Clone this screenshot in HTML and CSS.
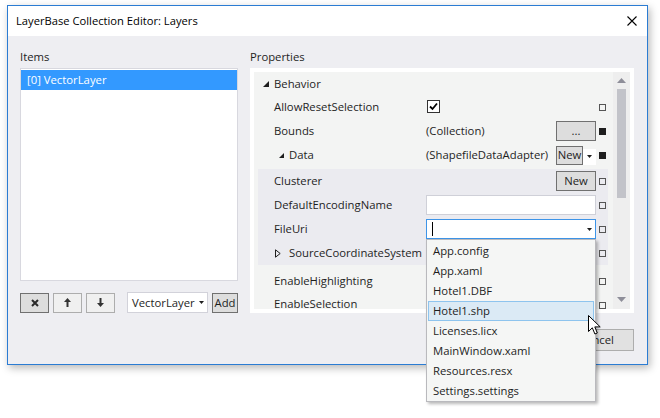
FILE: index.html
```html
<!DOCTYPE html>
<html>
<head>
<meta charset="utf-8">
<title>LayerBase Collection Editor: Layers</title>
<link rel="stylesheet" href="styles.css">
</head>
<body>
<div class="window">
  <div class="titlebar">
    <span class="title">LayerBase Collection Editor: Layers</span>
    <svg class="close" width="10" height="10" viewBox="0 0 10 10"><path d="M0.5 0.5L9.5 9.5M9.5 0.5L0.5 9.5" stroke="#000" stroke-width="1.1" fill="none"/></svg>
  </div>
  <div class="body">
    <div class="columns">
      <div class="left-col">
        <div class="label">Items</div>
        <div class="items-list">
          <div class="item selected">[0] VectorLayer</div>
        </div>
        <div class="toolbar">
          <div class="tbtn dark"><svg width="8" height="8" viewBox="0 0 8 8"><path d="M1 1L7 7M7 1L1 7" stroke="#2a2a2a" stroke-width="2" fill="none"/></svg></div>
          <div class="tbtn"><svg width="7" height="9" viewBox="0 0 7 9"><path d="M3.5 0L7 4H4.5V9H2.5V4H0Z" fill="#333"/></svg></div>
          <div class="tbtn"><svg width="7" height="9" viewBox="0 0 7 9"><path d="M3.5 9L7 5H4.5V0H2.5V5H0Z" fill="#333"/></svg></div>
          <div class="combo-sm"><span>VectorLayer</span><svg width="5" height="3" viewBox="0 0 5 3"><path d="M0 0H5L2.5 3Z" fill="#1e1e1e"/></svg></div>
          <div class="add">Add</div>
        </div>
      </div>
      <div class="right-col">
        <div class="label">Properties</div>
        <div class="panel">
          <div class="grid">
            <div class="row cat">
              <div class="name"><svg class="exp" width="6" height="6" viewBox="0 0 6 6"><path d="M6 0V6H0Z" fill="#1e1e1e"/></svg>Behavior</div>
              <div class="value"></div>
              <div class="mark"></div>
            </div>
            <div class="row">
              <div class="name">AllowResetSelection</div>
              <div class="value"><span class="check"><svg width="11" height="11" viewBox="0 0 11 11"><path d="M2 5.5L4.5 8L9 2.5" stroke="#000" stroke-width="1.8" fill="none"/></svg></span></div>
              <div class="mark"><i class="sq"></i></div>
            </div>
            <div class="row">
              <div class="name">Bounds</div>
              <div class="value"><span>(Collection)</span><span class="pbtn wide">...</span></div>
              <div class="mark"><i class="sq set"></i></div>
            </div>
            <div class="row">
              <div class="name"><svg class="exp-sm" width="5" height="5" viewBox="0 0 5 5"><path d="M5 0V5H0Z" fill="#1e1e1e"/></svg>Data</div>
              <div class="value"><span>(ShapefileDataAdapter)</span><span class="split"><span class="pbtn new">New</span><span class="drop"><svg width="5" height="3" viewBox="0 0 5 3"><path d="M0 0H5L2.5 3Z" fill="#1e1e1e"/></svg></span></span></div>
              <div class="mark"><i class="sq set"></i></div>
            </div>
            <div class="nested">
              <div class="row">
                <div class="name">Clusterer</div>
                <div class="value end"><span class="pbtn wide">New</span></div>
                <div class="mark"><i class="sq"></i></div>
              </div>
              <div class="row">
                <div class="name">DefaultEncodingName</div>
                <div class="value"><span class="textbox"></span></div>
                <div class="mark"><i class="sq"></i></div>
              </div>
              <div class="row">
                <div class="name">FileUri</div>
                <div class="value"><span class="textbox focus"><span class="caret"></span><svg width="5" height="3" viewBox="0 0 5 3"><path d="M0 0H5L2.5 3Z" fill="#1e1e1e"/></svg></span></div>
                <div class="mark"><i class="sq"></i></div>
              </div>
              <div class="row">
                <div class="name"><svg class="exp-hollow" width="6" height="9" viewBox="0 0 6 9"><path d="M0.5 0.8L5.2 4.5L0.5 8.2Z" stroke="#1e1e1e" stroke-width="1" fill="none"/></svg>SourceCoordinateSystem</div>
                <div class="value"></div>
                <div class="mark"><i class="sq"></i></div>
              </div>
            </div>
            <div class="row">
              <div class="name">EnableHighlighting</div>
              <div class="value"></div>
              <div class="mark"><i class="sq"></i></div>
            </div>
            <div class="row last">
              <div class="name">EnableSelection</div>
              <div class="value"></div>
              <div class="mark"><i class="sq"></i></div>
            </div>
          </div>
          <div class="scrollbar">
            <svg class="sb-up" width="9" height="5" viewBox="0 0 9 5"><path d="M0 5L4.5 0L9 5Z" fill="#8e8e99"/></svg>
            <div class="thumb"></div>
            <svg class="sb-down" width="9" height="5" viewBox="0 0 9 5"><path d="M0 0L4.5 5L9 0Z" fill="#8e8e99"/></svg>
          </div>
        </div>
      </div>
    </div>
    <div class="footer">
      <div class="btn">Cancel</div>
    </div>
  </div>
  <div class="popup">
    <div class="opt">App.config</div>
    <div class="opt">App.xaml</div>
    <div class="opt">Hotel1.DBF</div>
    <div class="opt hover">Hotel1.shp</div>
    <div class="opt">Licenses.licx</div>
    <div class="opt">MainWindow.xaml</div>
    <div class="opt">Resources.resx</div>
    <div class="opt">Settings.settings</div>
  </div>
  <svg class="cursor" width="14" height="21" viewBox="0 0 14 21"><path d="M0.5 0.5V16.5L4.3 12.8L6.9 19L9.3 18L6.8 11.9H12.2Z" fill="#fff" stroke="#000" stroke-width="1" stroke-linejoin="miter"/></svg>
</div>
</body>
</html>
```
FILE: styles.css
```css
* { box-sizing: border-box; }
html { height: 100%; margin: 0; background: #ffffff; }
body {
  margin: 0;
  min-height: 418px;
  height: 100%;
  background: #ffffff;
  padding: 5px 0 0 7px;
  font: 11.3px/16px "Open Sans", "Noto Sans", sans-serif;
  color: #1e1e1e;
}
.window {
  position: relative;
  width: 641px;
  height: 360px;
  border: 1px solid #2b7cd3;
  background: #eeeef2;
  box-shadow: 2px 3px 8px rgba(0, 0, 0, 0.28);
  display: flex;
  flex-direction: column;
}
.titlebar {
  height: 30px;
  flex: none;
  background: #ffffff;
  display: flex;
  align-items: center;
  padding: 0 10px 0 8px;
  font-size: 11.2px;
  color: #000;
}
.close { margin-left: auto; }
.body {
  flex: 1;
  padding: 13px 13px 13px 12px;
  display: flex;
  flex-direction: column;
}
.columns { display: flex; gap: 12px; }
.left-col { width: 218px; display: flex; flex-direction: column; }
.right-col { width: 384px; display: flex; flex-direction: column; }
.label { height: 16px; margin-bottom: 3px; }
.items-list {
  height: 213px;
  background: #ffffff;
  border: 1px solid #d8d8df;
  padding: 1px 0;
}
.item { height: 20px; line-height: 20px; padding-left: 6px; }
.item.selected { background: #3399ff; color: #ffffff; }
.toolbar {
  margin-top: 11px;
  height: 21px;
  display: flex;
  align-items: center;
  gap: 4px;
}
.tbtn {
  width: 29px;
  height: 20px;
  border: 1px solid #adadad;
  background: #f0f0f0;
  display: flex;
  align-items: center;
  justify-content: center;
}
.tbtn.dark { background: #dddddd; border-color: #707070; }
.combo-sm {
  margin-left: 8px;
  width: 81px;
  height: 21px;
  background: #ffffff;
  border: 1px solid #d2d2da;
  display: flex;
  align-items: center;
  justify-content: space-between;
  padding: 0 3px 0 4px;
}
.add {
  width: 26px;
  height: 20px;
  background: #dddddd;
  border: 1px solid #707070;
  display: flex;
  align-items: center;
  justify-content: center;
}
.panel {
  height: 245px;
  background: #ffffff;
  padding: 4px;
  display: flex;
}
.grid {
  width: 359px;
  height: 237px;
  background: #f3f4f3;
}
.row { height: 24px; display: flex; align-items: center; }
.row.cat { height: 23px; }
.row.last { height: 16px; align-items: flex-start; padding-top: 6px; }
.row.last .name { line-height: 10px; }
.row.last .mark { padding-top: 3px; }
.name {
  width: 172px;
  padding-left: 20px;
  display: flex;
  align-items: center;
  white-space: nowrap;
}
.row.cat .name { padding-left: 9px; }
.exp { margin-right: 5px; }
.exp-sm { margin: 0 5px; }
.exp-hollow { margin: 0 8px 0 1px; }
.value {
  width: 170px;
  height: 100%;
  display: flex;
  align-items: center;
  justify-content: space-between;
  white-space: nowrap;
}
.value.end { justify-content: flex-end; }
.mark {
  width: 17px;
  padding-left: 3px;
  display: flex;
  align-items: center;
}
.sq {
  display: block;
  width: 7px;
  height: 7px;
  border: 1px solid #555555;
}
.sq.set { background: #1e1e1e; border-color: #1e1e1e; }
.check {
  width: 13px;
  height: 13px;
  margin: 0 0 2px 1px;
  border: 1px solid #333333;
  background: #ffffff;
  display: flex;
  align-items: center;
  justify-content: center;
}
.pbtn {
  height: 20px;
  background: #dddddd;
  border: 1px solid #707070;
  display: flex;
  align-items: center;
  justify-content: center;
}
.pbtn.wide { width: 40px; }
.pbtn.new { width: 27px; height: 19px; }
.split { display: flex; align-items: center; }
.drop {
  width: 13px;
  height: 16px;
  background: #ffffff;
  display: flex;
  align-items: center;
  justify-content: center;
  margin-top: 3px;
}
.textbox {
  width: 170px;
  height: 20px;
  background: #ffffff;
  border: 1px solid #cfd0d8;
  display: flex;
  align-items: center;
  justify-content: space-between;
  padding: 0 3px 0 5px;
}
.textbox.focus { border-color: #3d94e8; }
.caret { width: 1px; height: 14px; background: #000; }
.nested {
  margin: 2px 5px 4px 4px;
  background: #ebebf0;
}
.nested .name { width: 168px; padding-left: 16px; }
.nested .mark { width: 12px; }
.scrollbar {
  width: 17px;
  height: 237px;
  background: #eeeeee;
  display: flex;
  flex-direction: column;
  align-items: center;
  padding: 6px 0 7px;
}
.thumb {
  width: 9px;
  height: 109px;
  margin-top: 6px;
  background: #c2c3c9;
}
.sb-down { margin-top: auto; }
.footer {
  margin-top: 16px;
  display: flex;
  justify-content: flex-end;
}
.btn {
  width: 75px;
  height: 22px;
  background: #e1e1e1;
  border: 1px solid #adadad;
  display: flex;
  align-items: center;
  justify-content: center;
}
.popup {
  position: absolute;
  z-index: 5;
  left: 418px;
  top: 233px;
  width: 170px;
  height: 163px;
  background: #f5f6f5;
  border: 1px solid #b9b9bd;
  padding-top: 1px;
  box-shadow: 2px 2px 3px rgba(0, 0, 0, 0.28);
}
.opt {
  height: 20px;
  line-height: 18px;
  margin: 0 1px;
  padding-left: 4px;
  border: 1px solid transparent;
  white-space: nowrap;
}
.opt.hover { background: #dbeaf5; border-color: #8ec4ee; }
.cursor {
  position: absolute;
  z-index: 6;
  left: 580px;
  top: 309px;
}
```
